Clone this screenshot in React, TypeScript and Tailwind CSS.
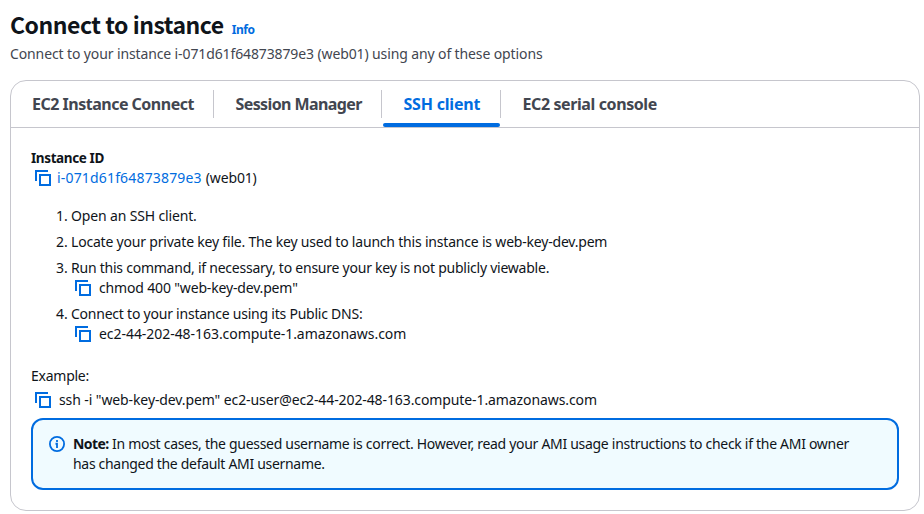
import type { ReactNode } from "react";

function CopyIcon() {
  return (
    <svg className="h-4 w-4 shrink-0" viewBox="0 0 16 16" fill="none" stroke="#006ce0" strokeWidth="2">
      <path d="M1 11V1h12" />
      <path d="M5 5h10v10H5z" />
    </svg>
  );
}

function InfoIcon() {
  return (
    <svg className="mt-0.5 h-4 w-4 shrink-0" viewBox="0 0 16 16" fill="none" stroke="#006ce0">
      <circle cx="8" cy="8" r="7.1" strokeWidth="1.8" />
      <path d="M8 4v2M6.5 7.75H8V12" strokeWidth="1.8" />
    </svg>
  );
}

function Tab({ children, className }: { children: ReactNode; className: string }) {
  return <div className={`relative flex h-full items-center whitespace-nowrap text-[16px] font-bold ${className}`}>{children}</div>;
}

function Divider() {
  return <div className="h-7 w-px shrink-0 bg-[#c6c6cd]" />;
}

export default function App() {
  return (
    <main className="h-[514px] w-[924px] overflow-hidden bg-white pl-[10px] pt-[10px] font-['Noto_Sans',sans-serif] text-[14px] leading-5 text-[#0f141a]">
      <header className="h-[70px] whitespace-nowrap">
        <div className="flex h-[30px] items-baseline gap-2">
          <h1 className="font-['Noto_Sans_CJK_SC','Noto_Sans',sans-serif] text-[23px] font-bold leading-[28px] tracking-[-0.48px]">Connect to instance</h1>
          <a className="text-[12px] font-bold tracking-[-0.45px] text-[#006ce0]">Info</a>
        </div>
        <p className="mt-1 tracking-[-0.118px] text-[#424650]">Connect to your instance i-071d61f64873879e3 (web01) using any of these options</p>
      </header>
      <section className="h-[431px] w-[910px] rounded-[16px] border border-[#c6c6cd]">
        <nav className="flex h-[47px] items-center border-b border-[#c6c6cd] text-[#424650]">
          <Tab className="w-[202px] pl-[21px]"><span className="tracking-[-0.5px]">EC2 Instance Connect</span></Tab>
          <Divider />
          <Tab className="w-[167px] pl-[21.5px]"><span className="tracking-[-0.6px]">Session Manager</span></Tab>
          <Divider />
          <Tab className="w-[118px] pl-[21.5px] text-[#006ce0]">
            <span className="tracking-[-0.2px]">SSH client</span>
            <div className="absolute bottom-0 left-px h-1 w-[117px] rounded-[2px] bg-[#006ce0]" />
          </Tab>
          <Divider />
          <Tab className="pl-[21.5px]"><span className="tracking-[-0.4px]">EC2 serial console</span></Tab>
        </nav>
        <div className="whitespace-nowrap pl-5 pt-5">
          <div className="text-[13.5px] font-bold tracking-[-0.39px]">Instance ID</div>
          <div className="flex items-center pl-1">
            <CopyIcon />
            <a className="ml-1.5 tracking-[0.17px] text-[#006ce0]">i-071d61f64873879e3</a>
            <span className="ml-1 tracking-[-0.15px]">(web01)</span>
          </div>
          <ol className="mt-[18px] flex list-none flex-col gap-1.5 pl-[25px]">
            <li className="flex"><span className="w-[15px]">1.</span><span className="tracking-[-0.15px]">Open an SSH client.</span></li>
            <li className="flex"><span className="w-[15px]">2.</span><span className="tracking-[-0.197px]">Locate your private key file. The key used to launch this instance is web-key-dev.pem</span></li>
            <li>
              <div className="flex"><span className="w-[15px]">3.</span><span className="tracking-[-0.237px]">Run this command, if necessary, to ensure your key is not publicly viewable.</span></div>
              <div className="flex items-center gap-2 pl-[19px]"><CopyIcon /><span className="tracking-[-0.16px]">chmod 400 "web-key-dev.pem"</span></div>
            </li>
            <li>
              <div className="flex"><span className="w-[15px]">4.</span><span className="tracking-[-0.23px]">Connect to your instance using its Public DNS:</span></div>
              <div className="flex items-center gap-2 pl-[19px]"><CopyIcon /><span className="tracking-[-0.05px]">ec2-44-202-48-163.compute-1.amazonaws.com</span></div>
            </li>
          </ol>
          <p className="mt-[22px] tracking-[-0.25px]">Example:</p>
          <div className="mt-1 flex items-center gap-2 pl-1">
            <CopyIcon />
            <span className="tracking-[-0.1px]">ssh -i "web-key-dev.pem" ec2-user@ec2-44-202-48-163.compute-1.amazonaws.com</span>
          </div>
          <div className="mt-2 flex h-[72px] w-[868px] gap-2 rounded-[12px] border-2 border-[#006ce0] bg-[#f0fbff] pl-4 pt-[14px]">
            <InfoIcon />
            <div>
              <div className="tracking-[-0.297px]"><b className="tracking-[-0.55px]">Note:</b> In most cases, the guessed username is correct. However, read your AMI usage instructions to check if the AMI owner</div>
              <div className="tracking-[-0.31px]">has changed the default AMI username.</div>
            </div>
          </div>
        </div>
      </section>
    </main>
  );
}
